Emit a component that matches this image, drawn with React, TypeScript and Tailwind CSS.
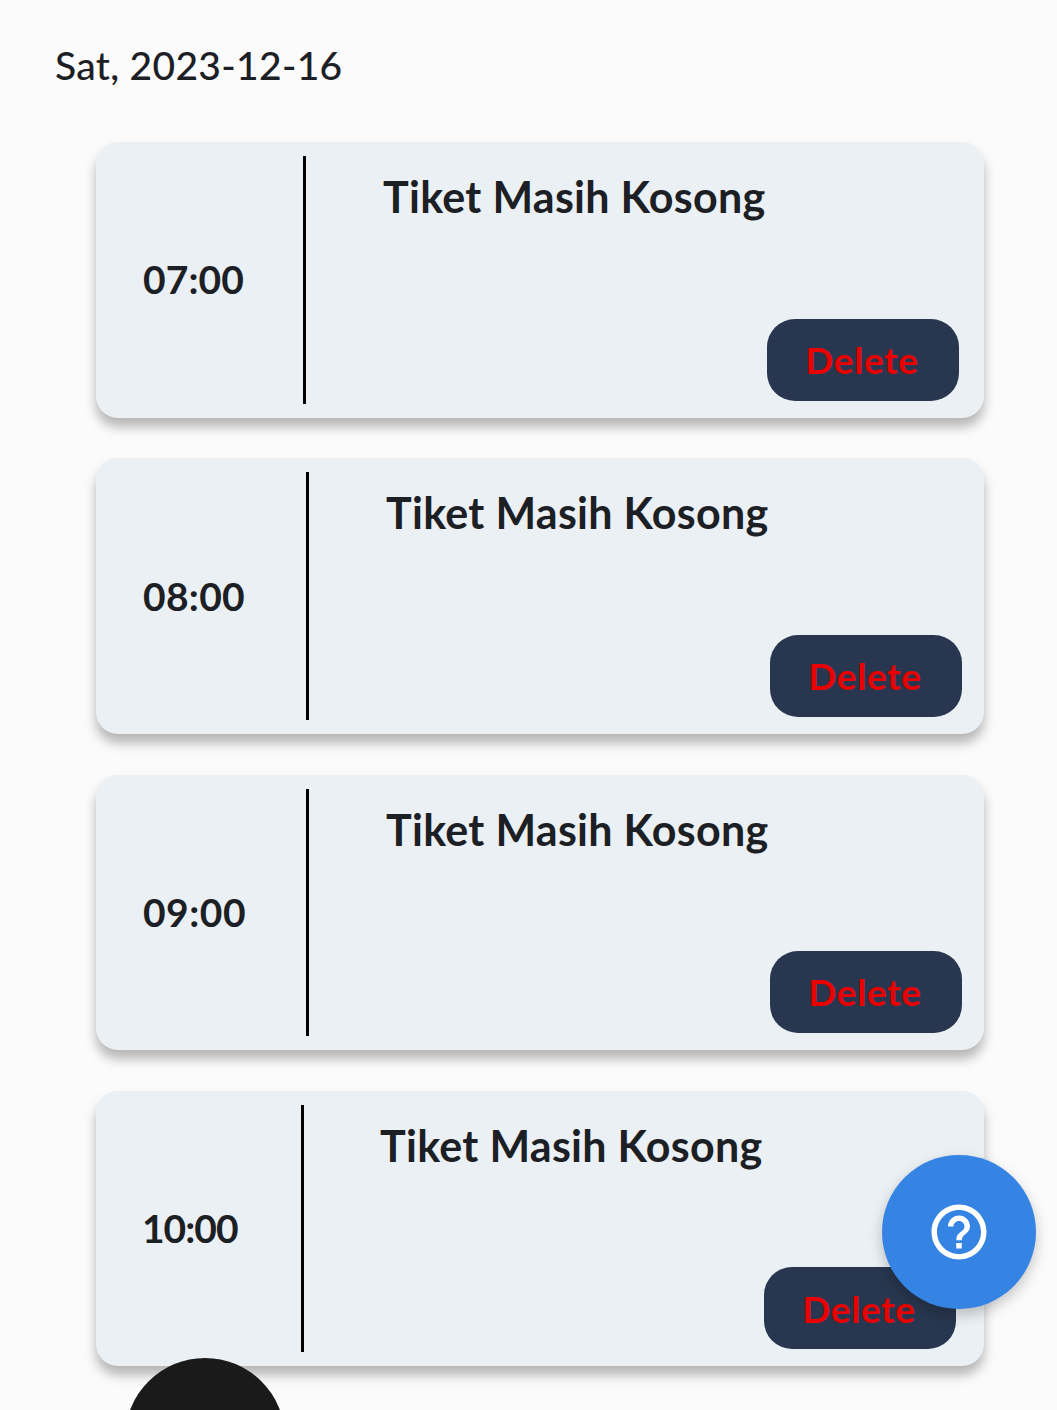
import React from 'react'

const slots = [
  { time: '07:00', timeClass: 'w-[100px] mr-[60px] tracking-[0.1px]', bodyClass: 'w-[653px]', titleClass: 'pl-[77px]' },
  { time: '08:00', timeClass: 'w-[102px] mr-[61px] tracking-[0.3px]', bodyClass: 'w-[653px]', titleClass: 'pl-[77px]' },
  { time: '09:00', timeClass: 'w-[103px] mr-[60px] tracking-[0.5px]', bodyClass: 'w-[653px]', titleClass: 'pl-[77px]' },
  { time: '10:00', timeClass: 'w-[96px] mr-[63px] -ml-px tracking-[-1px]', bodyClass: 'w-[652px]', titleClass: 'pl-[76px]' },
]

const font = { fontFamily: '"Lato", "Noto Sans", sans-serif' }

interface SlotCardProps {
  time: string
  timeClass: string
  bodyClass: string
  titleClass: string
}

const SlotCard: React.FC<SlotCardProps> = ({ time, timeClass, bodyClass, titleClass }) => (
  <div className="flex h-[275.5px] w-[888px] rounded-[22px] bg-[#ebf0f4] pl-[47px] py-[14px] shadow-[0_9px_12px_rgba(0,0,0,0.28)] overflow-hidden">
    <div className={`self-center shrink-0 whitespace-nowrap text-[39px] font-bold leading-none text-[#1c2024] ${timeClass}`}>
      {time}
    </div>
    <div className="w-[3px] shrink-0 bg-black" />
    <div className={`flex shrink-0 flex-col pb-[3px] ${bodyClass}`}>
      <div className={`mt-[14px] text-[43px] leading-[54px] font-bold text-[#1c2024] tracking-[0.3px] whitespace-nowrap ${titleClass}`}>
        Tiket Masih Kosong
      </div>
      <button className="mt-auto flex h-[82px] w-[192px] items-center justify-center self-end rounded-[28px] bg-[#28374f] pr-[2px] text-[37px] font-bold text-[#e90000] tracking-[0.6px]">
        Delete
      </button>
    </div>
  </div>
)

export default function App() {
  return (
    <div className="relative h-[1410px] w-[1057px] overflow-hidden bg-[#fbfbfb]" style={font}>
      <div className="pl-[55px] pt-[39px] text-[39px] leading-[52px] font-medium text-[#1c2024] tracking-[0.3px]">
        Sat, 2023-12-16
      </div>
      <div className="mt-[51px] flex flex-col gap-[40.8px] pl-[96px]">
        {slots.map((slot) => (
          <SlotCard key={slot.time} {...slot} />
        ))}
      </div>

      <div className="absolute left-[125px] top-[1358px] h-[160px] w-[160px] rounded-full bg-[#1a1a1a]" />

      <button className="absolute left-[882px] top-[1155px] flex h-[154px] w-[154px] items-center justify-center rounded-full bg-[#3584e4] shadow-[0_6px_14px_rgba(0,0,0,0.22)]">
        <svg width="66" height="66" viewBox="0 0 24 24" fill="#ffffff">
          <path d="M11 18h2v-2h-2v2zm1-16C6.48 2 2 6.48 2 12s4.48 10 10 10 10-4.48 10-10S17.52 2 12 2zm0 18c-4.41 0-8-3.59-8-8s3.59-8 8-8 8 3.59 8 8-3.59 8-8 8zm0-14c-2.21 0-4 1.79-4 4h2c0-1.1.9-2 2-2s2 .9 2 2c0 2-3 1.75-3 5h2c0-2.25 3-2.5 3-5 0-2.21-1.79-4-4-4z" />
        </svg>
      </button>
    </div>
  )
}
